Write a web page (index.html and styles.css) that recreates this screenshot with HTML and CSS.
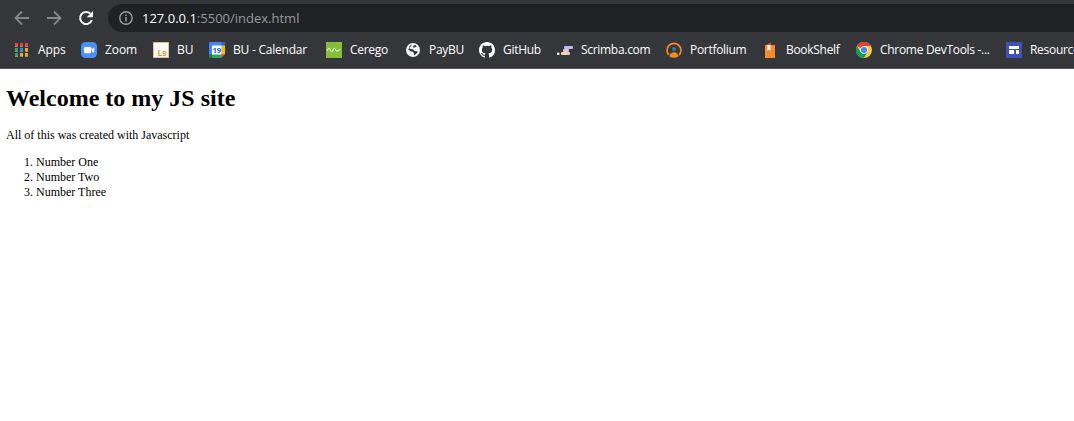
FILE: index.html
```
<!DOCTYPE html>
<html lang="en">
<head>
<meta charset="utf-8">
<title>127.0.0.1:5500/index.html</title>
<link rel="stylesheet" href="styles.css">
</head>
<body>
<header class="browser">
  <div class="toolbar">
    <svg class="nav" viewBox="0 0 16 16"><path d="M15 8H2M8 1.5 1.5 8 8 14.5" fill="none" stroke="#85878a" stroke-width="1.8"/></svg>
    <svg class="nav" viewBox="0 0 16 16"><path d="M1 8h13M8 1.5 14.5 8 8 14.5" fill="none" stroke="#85878a" stroke-width="1.8"/></svg>
    <svg class="nav" viewBox="0 0 16 16"><path d="M12.4 3.8A6 6 0 1 0 13.8 10" fill="none" stroke="#f1f3f4" stroke-width="2.1"/><path d="M15 1v6.3H8.7z" fill="#f1f3f4"/></svg>
    <div class="address">
      <svg class="info" viewBox="0 0 14 14"><circle cx="7" cy="7" r="6.2" fill="none" stroke="#9aa0a6" stroke-width="1.4"/><path d="M7 6v4.5M7 3.4v1.6" stroke="#9aa0a6" stroke-width="1.5"/></svg>
      <span class="url"><span class="host">127.0.0.1</span>:5500/index.html</span>
    </div>
  </div>
  <nav class="bookmarks">
    <a class="bookmark apps"><svg viewBox="0 0 16 16"><path fill="#f43b3b" d="M1 1h3v3H1zM6 1h3v3H6zM11 1h3v3h-3z"/><path fill="#34a35a" d="M1 6h3v3H1zM1 11h3v3H1z"/><path fill="#2188f3" d="M6 6h3v3H6z"/><path fill="#fbab00" d="M11 6h3v3h-3zM6 11h3v3H6zM11 11h3v3h-3z"/><path fill="#8d8d90" d="M1 4h3v1H1zM6 4h3v1H6zM11 4h3v1h-3zM1 9h3v1H1zM6 9h3v1H6zM11 9h3v1h-3zM1 14h3v1H1zM6 14h3v1H6zM11 14h3v1h-3z"/></svg><span>Apps</span></a>
    <a class="bookmark zoom"><svg viewBox="0 0 16 16"><rect width="16" height="16" rx="4.5" fill="#4a90fb"/><rect x="3" y="5" width="7.2" height="6.2" rx="1.3" fill="#fff"/><path d="m10.6 7.3 2.6-2v5.6l-2.6-1.8z" fill="#fff"/></svg><span>Zoom</span></a>
    <a class="bookmark bu"><svg viewBox="0 0 16 16"><path fill="#fffaf5" stroke="#e9bf98" d="M.5.5h15v15H.5z"/><text x="4.4" y="13.6" class="lb">L<tspan class="small-b">B</tspan></text></svg><span>BU</span></a>
    <a class="bookmark calendar"><svg viewBox="0 0 16 16"><path fill="#4285f4" d="M1.2 0h13.6Q16 0 16 1.2V12l-4 4H0V1.2Q0 0 1.2 0z"/><path fill="#1967d2" d="M12.5 0h2.3Q16 0 16 1.2V3.5h-3.5z"/><path fill="#fbbc04" d="M12.5 3.5H16v9h-3.5z"/><path fill="#188038" d="M0 12.5h3.5V16H1.2Q0 16 0 14.8z"/><path fill="#34a853" d="M3.5 12.5h9V16h-9z"/><path fill="#35363a" d="M16 12.5V16h-3.5z"/><path fill="#ea4335" d="M12.5 12.5H16L12.5 16z"/><path fill="#fff" d="M3 3.5h9.5v9H3z"/><text x="7.7" y="11.2" class="day">19</text></svg><span>BU - Calendar</span></a>
    <a class="bookmark cerego"><svg viewBox="0 0 16 16"><path fill="#84bd3c" d="M0 0h16v16H0z"/><path d="M1 9q1.7-4.5 3.2-1.2T7 8q1.4-3.4 2.4-.4 1.8 3.5 5-.9" fill="none" stroke="#d9f0b4" stroke-width="1.1"/></svg><span>Cerego</span></a>
    <a class="bookmark paybu"><svg viewBox="0 0 16 16"><circle cx="8" cy="8" r="7" fill="#f1f3f4"/><path d="M7.2 2.5Q4.8 3 4 5l1 1.8 3.5.8 1 1.5 3 .2-.2 1.4-2.5 2.2-1 .3.2-2L7.5 9.6H5.8L3.5 7.5 2.7 8M8.5 3.4l2.2-.5.8 1.6-2 .9-1.2.5z" fill="#35363a"/></svg><span>PayBU</span></a>
    <a class="bookmark github"><svg viewBox="0 0 16 16"><path fill="#fff" d="M8 0C3.58 0 0 3.58 0 8c0 3.54 2.29 6.53 5.47 7.59.4.07.55-.17.55-.38 0-.19-.01-.82-.01-1.49-2.01.37-2.53-.49-2.69-.94-.09-.23-.48-.94-.82-1.13-.28-.15-.68-.52-.01-.53.63-.01 1.08.58 1.23.82.72 1.21 1.87.87 2.33.66.07-.52.28-.87.51-1.07-1.78-.2-3.64-.89-3.64-3.95 0-.87.31-1.59.82-2.15-.08-.2-.36-1.02.08-2.12 0 0 .67-.21 2.2.82A7.7 7.7 0 0 1 8 3.86c.68 0 1.36.09 2 .27 1.53-1.04 2.2-.82 2.2-.82.44 1.1.16 1.92.08 2.12.51.56.82 1.27.82 2.15 0 3.07-1.87 3.75-3.65 3.95.29.25.54.73.54 1.48 0 1.07-.01 1.93-.01 2.2 0 .21.15.46.55.38A8 8 0 0 0 16 8c0-4.42-3.58-8-8-8z"/></svg><span>GitHub</span></a>
    <a class="bookmark scrimba"><svg viewBox="0 0 16 16"><rect x="7" y="4" width="9" height="3" rx="1" fill="#c5b5f3"/><rect x="6" y="7" width="6" height="3" rx="1" fill="#d9c7d9"/><rect x="4" y="10" width="9" height="3" rx="1" fill="#f7d1ad"/><rect x="0" y="10.5" width="2.5" height="2.5" rx="1" fill="#fff"/></svg><span>Scrimba.com</span></a>
    <a class="bookmark portfolium"><svg viewBox="0 0 16 16"><path d="M2.8 13A7 7 0 1 1 13.2 13" fill="none" stroke="#f68b1f" stroke-width="1.7"/><circle cx="8" cy="7" r="2" fill="#2f7896"/><path d="M3.4 14.2Q4.5 10.3 8 10.3t4.6 3.9Q8 17.3 3.4 14.2z" fill="#f68b1f"/></svg><span>Portfolium</span></a>
    <a class="bookmark bookshelf"><svg viewBox="0 0 16 16"><path fill="#f68b2c" d="M3 3h10v13H3z"/><path fill="#d9481c" d="M3 3.2 9 .3V3z"/><path fill="#fff" d="M5.4 3h3v6L6.9 7.5 5.4 9z"/></svg><span>BookShelf</span></a>
    <a class="bookmark devtools"><svg viewBox="0 0 16 16"><circle cx="8" cy="8" r="8" fill="#fbcb43"/><path fill="#db4437" d="M8 8 1.07 4A8 8 0 0 1 14.93 4H8z"/><path fill="#0f9d58" d="M1.07 4A8 8 0 0 0 8 16l3.46-6L8 8 4.54 10z"/><circle cx="8" cy="8" r="3.8" fill="#f1f3f4"/><circle cx="8" cy="8" r="3" fill="#4285f4"/></svg><span>Chrome DevTools -...</span></a>
    <a class="bookmark resources"><svg viewBox="0 0 16 16"><path fill="#3f51b5" d="M0 0h16v16H0z"/><path fill="#fff" d="M3 4h10v3H3zM3 8h5v4H3zM10 8h3v4h-3z"/></svg><span>Resource</span></a>
  </nav>
</header>
<main class="page">
  <h1>Welcome to my JS site</h1>
  <p>All of this was created with Javascript</p>
  <ol><li>Number One</li><li>Number Two</li><li>Number Three</li></ol>
</main>
</body>
</html>
```
FILE: styles.css
```
body { margin: 0; background: #fff; overflow: hidden; }
.browser {
  box-sizing: border-box;
  height: 69px;
  padding-top: 4px;
  background: #35363a;
  border-bottom: 1px solid #55565a;
  font-family: "Open Sans", "Noto Sans", sans-serif;
  overflow: hidden;
}
.toolbar { display: flex; align-items: center; gap: 16px; height: 28px; padding-left: 14px; }
.nav { width: 16px; height: 16px; flex: none; }
.address {
  display: flex;
  align-items: center;
  gap: 9px;
  flex: 1;
  height: 28px;
  margin-left: -2px;
  padding-left: 11px;
  border-radius: 14px 0 0 14px;
  background: #202124;
}
.info { width: 14px; height: 14px; }
.url { color: #96999d; font-size: 13px; line-height: 28px; white-space: nowrap; }
.host { color: #fff; }
.bookmarks { display: flex; height: 36px; padding-left: 14px; align-items: center; }
.bookmark {
  display: flex;
  flex: none;
  align-items: center;
  gap: 8px;
  color: #fff;
  font-size: 12px;
  line-height: 16px;
  letter-spacing: -.3px;
  white-space: nowrap;
}
.bookmark svg { width: 16px; height: 16px; flex: none; letter-spacing: 0; }
.apps { width: 67px; }
.zoom { width: 72px; }
.bu { width: 56px; }
.calendar { width: 117px; }
.cerego { width: 79px; }
.paybu { width: 74px; }
.github { width: 78px; }
.scrimba { width: 109px; }
.portfolium { width: 96px; }
.bookshelf { width: 94px; }
.devtools { width: 150px; }
.apps, .zoom, .bu { letter-spacing: -.1px; }
.calendar { letter-spacing: -.22px; }
.lb { fill: #e99a4a; font-size: 8.5px; font-weight: bold; }
.small-b { font-size: 6.5px; }
.day { fill: #1967d2; font-size: 7.5px; font-weight: bold; text-anchor: middle; }
.page { padding: 0 6px; color: #000; font-family: "Liberation Serif", serif; font-size: 12px; line-height: 15px; }
.page h1 { margin: 15px 0 16px; font-size: 24px; line-height: 28px; }
.page p { margin: 0 0 12px; }
.page ol { margin: 0; padding-left: 30px; }
```
